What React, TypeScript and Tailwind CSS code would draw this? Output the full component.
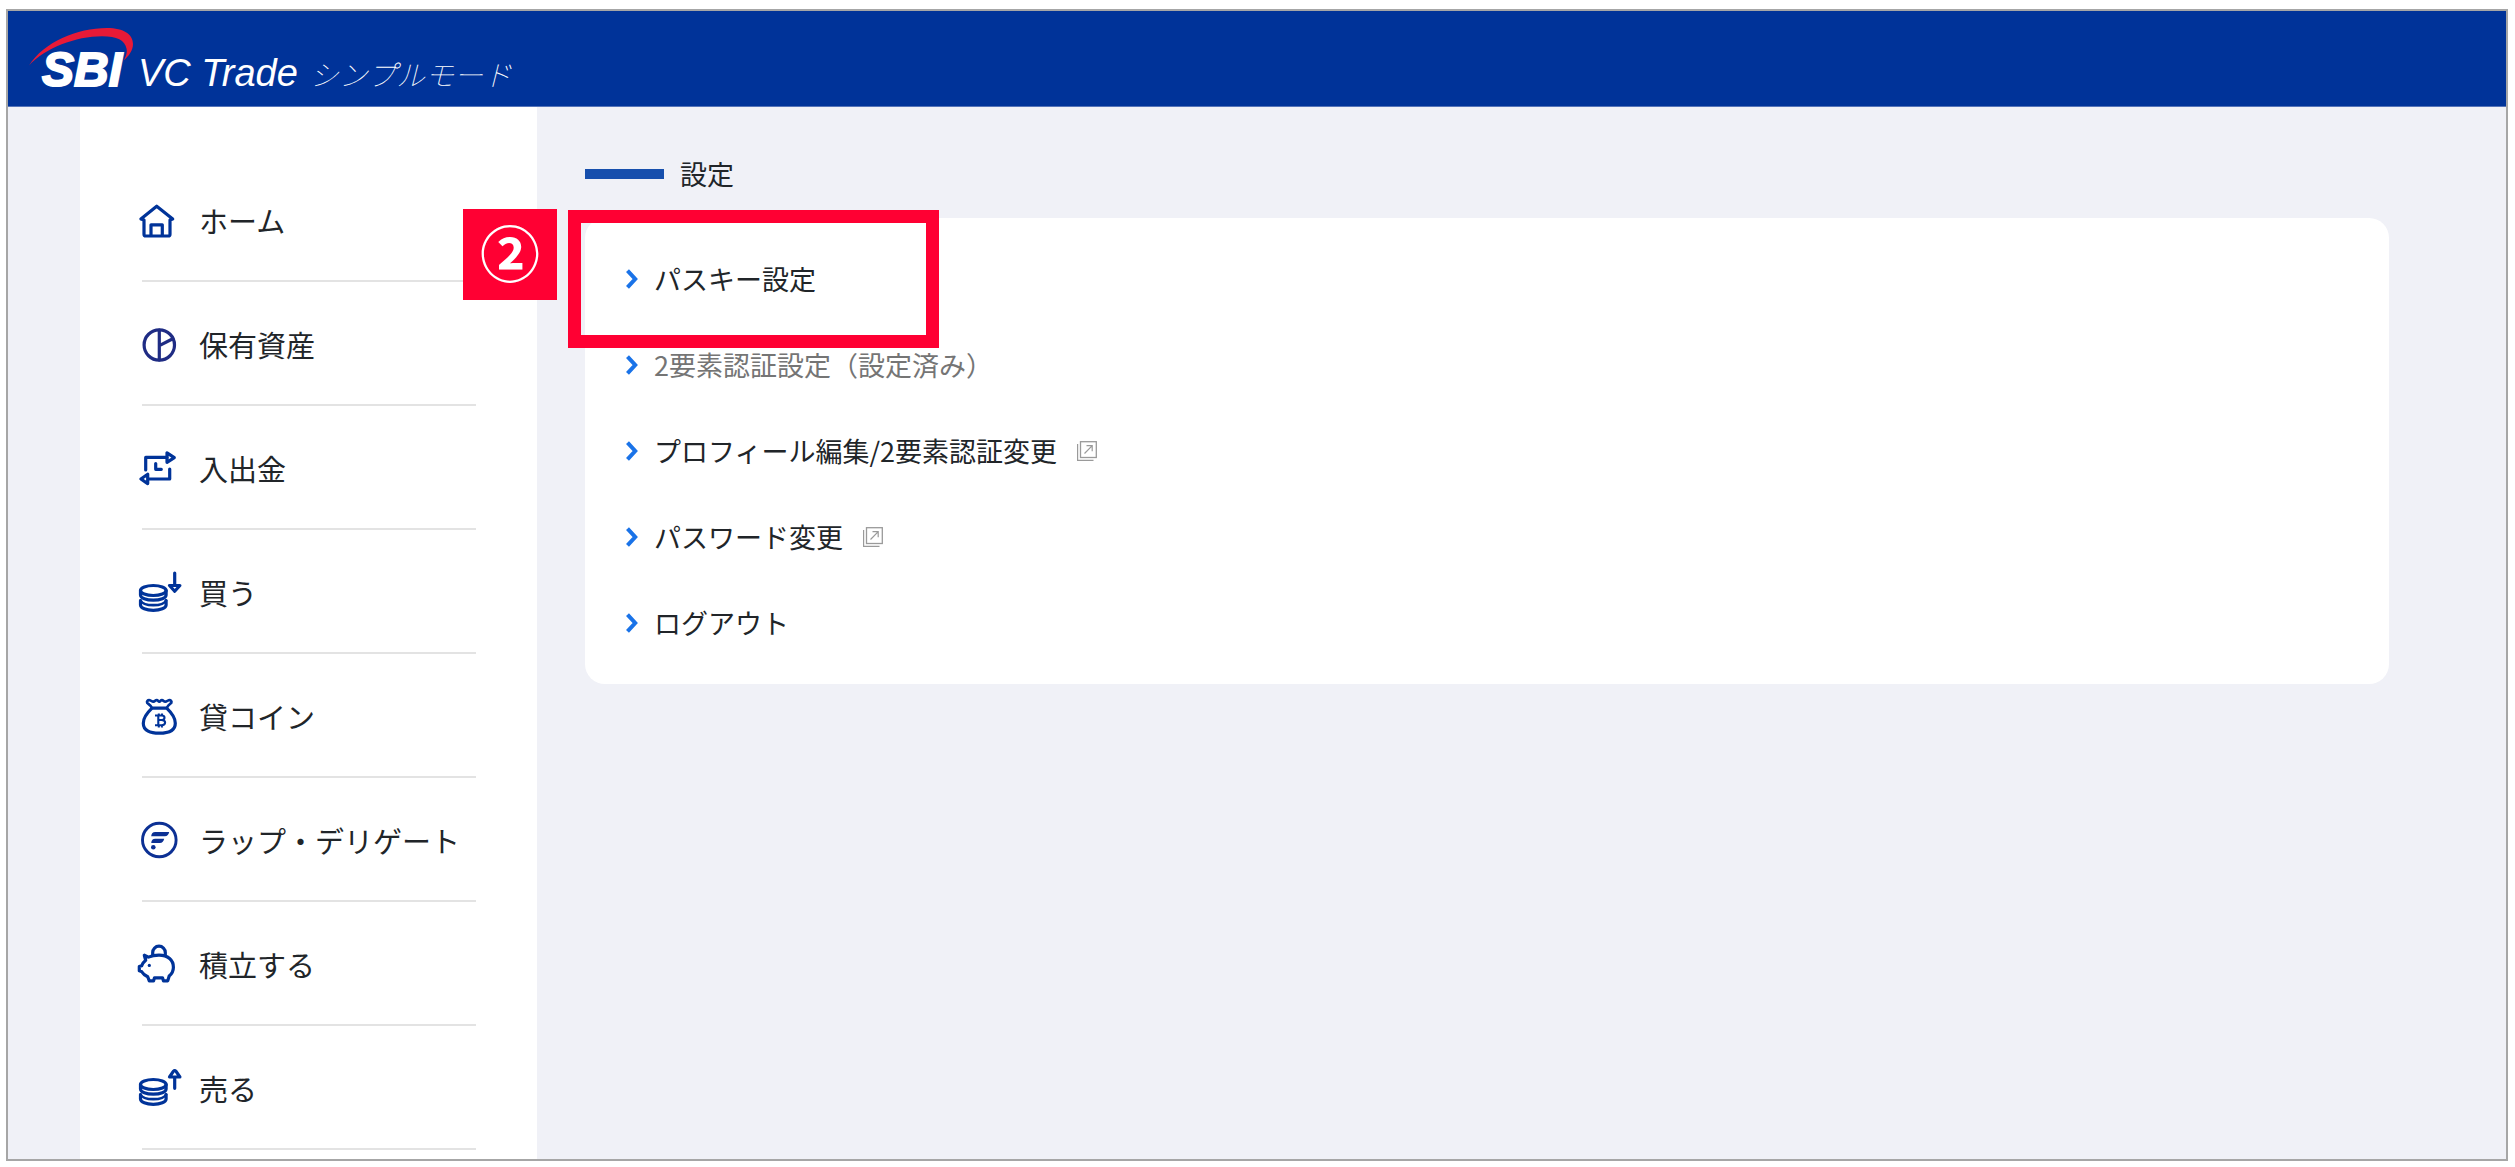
import React from "react";

type NavItem = {
  label: string;
  icon: React.ReactNode;
};

type SettingItem = {
  label: string;
  muted?: boolean;
  external?: boolean;
  step?: string;
};

function Icon({ children, color = "#003399" }: { children: React.ReactNode; color?: string }) {
  return (
    <svg
      className="size-12 shrink-0"
      viewBox="0 0 48 48"
      fill="none"
      stroke={color}
      strokeWidth="3.2"
      strokeLinecap="round"
      strokeLinejoin="round"
      aria-hidden="true"
    >
      {children}
    </svg>
  );
}

function CoinStack() {
  return (
    <>
      <ellipse cx="17.3" cy="21.5" rx="12.8" ry="5" />
      <path d="M4.5 21.5v4.5c0 3.2 5.8 5.2 12.8 5.2s12.8-2 12.8-5.2v-4.5" />
      <path d="M4.5 31.5V36c0 3.2 5.8 5.3 12.8 5.3s12.8-2.1 12.8-5.3v-4.5" />
      <path d="M4.5 31.5c1.5 3.2 6.5 4.7 12.8 4.7s11.3-1.5 12.8-4.7" strokeWidth="2.7" />
    </>
  );
}

const navItems: NavItem[] = [
  {
    label: "ホーム",
    icon: (
      <Icon>
        <path d="M8 23v14.2q0 1.8 1.8 1.8h22.400q1.800 0 1.800-1.800V23l2.700-1L20.700 9.200 4.900 22Z" />
        <path d="M15 38.500V27.800h11.300v10.700" />
      </Icon>
    ),
  },
  {
    label: "保有資産",
    icon: (
      <Icon color="#1f2c84">
        <circle cx="23.3" cy="24" r="15.2" />
        <path d="M23.300 9v30M23.300 24.600l13.500-6.800" />
      </Icon>
    ),
  },
  {
    label: "入出金",
    icon: (
      <Icon>
        <path d="M9.700 25V12.400H31M33.700 24v10H13" />
        <path d="M31 7.900v9.400l7.300-4.700ZM11.700 29.200v9.400L4.900 34Z" />
        <path d="M19.700 18.500v5.800h5.600" />
      </Icon>
    ),
  },
  {
    label: "買う",
    icon: (
      <Icon>
        <CoinStack />
        <path d="M38.700 4v12M33.500 16.500h10.400l-5.200 5.800Z" />
      </Icon>
    ),
  },
  {
    label: "貸コイン",
    icon: (
      <Icon>
        <path
          d="M16 15.200c-.6-2.400-2.600-3.600-4.700-5.200-.9-1.500.4-3.300 2.600-2.800 1.600.4 1.900 1.500 3.400 1.500 1.700 0 1.900-1.600 3.400-1.600s1.400 1.600 2.600 1.600 1.200-1.600 2.600-1.600c1.600 0 1.800 1.600 3.400 1.600s1.800-1.100 3.400-1.500c2.100-.5 3.400 1.300 2.500 2.800-1.900 1.600-3.900 2.800-4.500 5.200"
          strokeWidth="2.7"
        />
        <path d="M16 15.200h14.700c4.200 4 8.600 9 8.600 15 0 7.700-7.300 10-16 10s-16-2.300-16-10c0-6 4.500-11 8.700-15Z" />
        <path
          d="M19 22.500h6.500c4 0 4 4.500 0 4.500H22M25.500 27c4.800 0 4.800 5.200 0 5.200H19M22.300 22.500v9.700M22.800 20.500V22M26 20.500V22M22.800 32.600v1.900M26 32.600v1.900"
          strokeWidth="2.1"
          strokeLinecap="butt"
        />
      </Icon>
    ),
  },
  {
    label: "ラップ・デリゲート",
    icon: (
      <Icon color="#0c3094">
        <circle cx="23.3" cy="23" r="16.800" strokeWidth="2.900" />
        <g fill="#0c3094" stroke="none">
          <path d="M15.200 19.200c.2-2.700 1.600-4.200 4-4.200h14c-.6 2.700-1.900 4.200-4.300 4.200Z" />
          <path d="M15.200 25.900c.2-2.700 1.600-4.200 4-4.200h9c-.6 2.700-1.900 4.200-4.300 4.200Z" />
          <circle cx="17.300" cy="30.300" r="2.300" />
        </g>
      </Icon>
    ),
  },
  {
    label: "積立する",
    icon: (
      <Icon>
        <path d="M16.700 14.500v-3a6.300 6.300 0 0 1 12.600 0v3" />
        <path d="M8.300 14.200l4.200 1.900c3-1.300 6.500-1.900 10.500-1.900 9 0 14.400 5 14.400 12 0 3.800-1.600 6.600-4.200 8.800l-1.500 4.900h-4.200l-1-3.100h-8l-1 3.100h-4.200l-1.600-4.200c-2.800-1.300-4.700-2.700-6.200-5.200l-2.200-.8v-4.100l2.400-.8c.8-2.400 2-4 4-5.600Z" />
        <circle cx="13.300" cy="24.400" r="1.600" fill="#003399" stroke="none" />
      </Icon>
    ),
  },
  {
    label: "売る",
    icon: (
      <Icon>
        <g transform="translate(0 -2)">
          <CoinStack />
        </g>
        <path d="M38.700 23.300V12.500M33.500 12h10.400l-4-5.800q-1.200-1.400-2.400 0Z" />
      </Icon>
    ),
  },
];

const settingItems: SettingItem[] = [
  { label: "パスキー設定", step: "②" },
  { label: "2要素認証設定（設定済み）", muted: true },
  { label: "プロフィール編集/2要素認証変更", external: true },
  { label: "パスワード変更", external: true },
  { label: "ログアウト" },
];

function Chevron() {
  return (
    <svg className="h-5 w-3 shrink-0" viewBox="0 0 12 20" fill="none" stroke="#1a73e8" strokeWidth="4" aria-hidden="true">
      <path d="M1.500 1.700 9.200 10l-7.700 8.300" />
    </svg>
  );
}

function ExternalIcon() {
  return (
    <svg className="size-5 shrink-0" viewBox="0 0 20 20" fill="none" stroke="#9a9a9a" aria-hidden="true">
      <rect x="3.500" y=".7" width="15.800" height="15.800" strokeWidth="1.300" />
      <path d="M.6 3v16.400H16.500" strokeWidth="1.200" />
      <path d="M7.500 12.500 15 4.800M9.500 4.600h5.700v5.700" strokeWidth="1.200" />
    </svg>
  );
}

function Header() {
  return (
    <header className="h-24 border-b border-[#5574b9] bg-[#003399] pt-[23px] pl-[34px] text-white">
      <a href="#" className="relative inline-flex items-baseline font-['Liberation_Sans',Arial,sans-serif] italic">
        <svg
          className="absolute -top-[6px] -left-[13px] h-[38px] w-[104px]"
          viewBox="0 0 104 38"
          fill="#e71a37"
          aria-hidden="true"
        >
          <path d="M0 37.500C15 14 48 0 78 0c17 0 26 6.500 26 16 0 6-4 12-9.300 16.500C97 28 98.500 25 97.500 20.500 96 12.500 88 8.300 73 8.300 47 8.300 16 20 0 37.500Z" />
        </svg>
        <span className="text-[48px] leading-[72px] font-bold [-webkit-text-stroke:2px_white]">SBI</span>
        <span className="ml-4 text-[38px]">VC Trade</span>
        <span className="ml-3 font-['Noto_Sans_CJK_JP',sans-serif] text-[29px] leading-none font-thin">
          シンプルモード
        </span>
      </a>
    </header>
  );
}

function Sidebar() {
  return (
    <nav className="ml-[72px] w-[457px] shrink-0 bg-white pt-[51px] pr-[61px] pb-[9px] pl-14">
      <ul>
        {navItems.map((item) => (
          <li key={item.label}>
            <a href="#" className="flex h-[122px] items-center gap-[15px] pt-1 text-[29px] whitespace-nowrap">
              {item.icon}
              {item.label}
            </a>
            <hr className="ml-[6px] border-t-2 border-[#e3e3e3]" />
          </li>
        ))}
      </ul>
    </nav>
  );
}

function StepMarker({ step }: { step: string }) {
  return (
    <>
      <span className="absolute -top-[27px] -left-[122px] flex h-[91px] w-[94px] items-center justify-center bg-[#ff0033] pb-2 text-[60px] leading-none font-bold text-white">
        {step}
      </span>
      <span className="pointer-events-none absolute -top-[26px] -left-[17px] h-[138px] w-[371px] border-[13px] border-[#ff0033]" />
    </>
  );
}

export default function App() {
  return (
    <div className="flex min-h-screen flex-col bg-white pt-[9px] pr-[7px] pb-[6px] pl-[6px] font-['Noto_Sans_CJK_JP',sans-serif] text-[#212529]">
      <div className="flex grow flex-col border-2 border-[#a6a6a6] bg-[#f0f1f7]">
        <Header />
        <div className="flex grow">
          <Sidebar />
          <main className="grow pt-[47px] pr-[117px] pl-12">
            <h1 className="flex items-center gap-4 text-[27px] leading-10">
              <span className="h-[10px] w-[79px] bg-[#174fad]" />
              設定
            </h1>
            <ul className="mt-6 rounded-[20px] bg-white py-[18px]">
              {settingItems.map((item) => (
                <li key={item.label} className="relative">
                  <a
                    href="#"
                    className={`flex h-[86px] items-center pl-[41px] text-[27px] ${
                      item.muted ? "text-[#757575]" : ""
                    }`}
                  >
                    <Chevron />
                    <span className="mr-5 ml-4">{item.label}</span>
                    {item.external && <ExternalIcon />}
                  </a>
                  {item.step && <StepMarker step={item.step} />}
                </li>
              ))}
            </ul>
          </main>
        </div>
      </div>
    </div>
  );
}
